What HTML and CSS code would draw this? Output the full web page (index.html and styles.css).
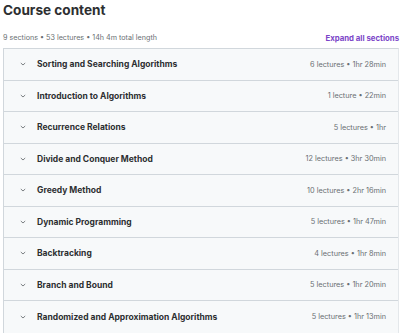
FILE: index.html
```html
<!DOCTYPE html>
<html>
<head>
  <meta charset="UTF-8">
  <title>Course content</title>
  <link rel="stylesheet" href="styles.css">
</head>
<body>
  <div class="curriculum">
    <h2 class="title">Course content</h2>

    <div class="summary">
      <span>9 sections • 53 lectures • 14h 4m total length</span>
      <button class="expand">Expand all sections</button>
    </div>

    <div class="sections">
      <div class="section">
        <span class="chevron"><svg width="8" height="8" viewBox="0 0 8 8"><path d="M1.8 3 L4 5 L6.2 3" fill="none" stroke="#5b5f63" stroke-width="0.8"/></svg></span>
        <span class="name">Sorting and Searching Algorithms</span>
        <span class="meta">6 lectures • 1hr 28min</span>
      </div>
      <div class="section">
        <span class="chevron"><svg width="8" height="8" viewBox="0 0 8 8"><path d="M1.8 3 L4 5 L6.2 3" fill="none" stroke="#5b5f63" stroke-width="0.8"/></svg></span>
        <span class="name">Introduction to Algorithms</span>
        <span class="meta">1 lecture • 22min</span>
      </div>
      <div class="section">
        <span class="chevron"><svg width="8" height="8" viewBox="0 0 8 8"><path d="M1.8 3 L4 5 L6.2 3" fill="none" stroke="#5b5f63" stroke-width="0.8"/></svg></span>
        <span class="name">Recurrence Relations</span>
        <span class="meta">5 lectures • 1hr</span>
      </div>
      <div class="section">
        <span class="chevron"><svg width="8" height="8" viewBox="0 0 8 8"><path d="M1.8 3 L4 5 L6.2 3" fill="none" stroke="#5b5f63" stroke-width="0.8"/></svg></span>
        <span class="name">Divide and Conquer Method</span>
        <span class="meta">12 lectures • 3hr 30min</span>
      </div>
      <div class="section">
        <span class="chevron"><svg width="8" height="8" viewBox="0 0 8 8"><path d="M1.8 3 L4 5 L6.2 3" fill="none" stroke="#5b5f63" stroke-width="0.8"/></svg></span>
        <span class="name">Greedy Method</span>
        <span class="meta">10 lectures • 2hr 16min</span>
      </div>
      <div class="section">
        <span class="chevron"><svg width="8" height="8" viewBox="0 0 8 8"><path d="M1.8 3 L4 5 L6.2 3" fill="none" stroke="#5b5f63" stroke-width="0.8"/></svg></span>
        <span class="name">Dynamic Programming</span>
        <span class="meta">5 lectures • 1hr 47min</span>
      </div>
      <div class="section">
        <span class="chevron"><svg width="8" height="8" viewBox="0 0 8 8"><path d="M1.8 3 L4 5 L6.2 3" fill="none" stroke="#5b5f63" stroke-width="0.8"/></svg></span>
        <span class="name">Backtracking</span>
        <span class="meta">4 lectures • 1hr 8min</span>
      </div>
      <div class="section">
        <span class="chevron"><svg width="8" height="8" viewBox="0 0 8 8"><path d="M1.8 3 L4 5 L6.2 3" fill="none" stroke="#5b5f63" stroke-width="0.8"/></svg></span>
        <span class="name">Branch and Bound</span>
        <span class="meta">5 lectures • 1hr 20min</span>
      </div>
      <div class="section">
        <span class="chevron"><svg width="8" height="8" viewBox="0 0 8 8"><path d="M1.8 3 L4 5 L6.2 3" fill="none" stroke="#5b5f63" stroke-width="0.8"/></svg></span>
        <span class="name">Randomized and Approximation Algorithms</span>
        <span class="meta">5 lectures • 1hr 13min</span>
      </div>
    </div>
  </div>
</body>
</html>
```

FILE: styles.css
```css
body {
  margin: 0;
  background-color: #ffffff;
  font-family: Inter, "Noto Sans", sans-serif;
  color: #2d2f31;
}

.curriculum {
  padding: 0 1px 0 3px;
}

.title {
  margin: 0;
  font-size: 13.6px;
  font-weight: 700;
  line-height: 20px;
}

.summary {
  display: flex;
  justify-content: space-between;
  align-items: center;
  height: 15px;
  margin-top: 10px;
  margin-bottom: 3px;
  font-size: 7.2px;
  color: #6a6f73;
}

.expand {
  padding: 0;
  border: none;
  background: none;
  font-family: inherit;
  font-size: 7.8px;
  font-weight: 700;
  color: #7b45c8;
  cursor: pointer;
}

.sections {
  border: 1px solid #d1d7dc;
  border-right-color: #e4e8eb;
}

.section {
  display: flex;
  align-items: center;
  height: 31.5px;
  padding: 0 12px 0 15px;
  background-color: #f7f9fa;
  border-bottom: 1px solid #d1d7dc;
  box-sizing: border-box;
}

.section:last-child {
  border-bottom: none;
}

.chevron {
  display: flex;
  width: 18px;
}

.name {
  flex: 1;
  font-size: 8.5px;
  font-weight: 700;
}

.meta {
  font-size: 7.3px;
  color: #6a6f73;
}
```
